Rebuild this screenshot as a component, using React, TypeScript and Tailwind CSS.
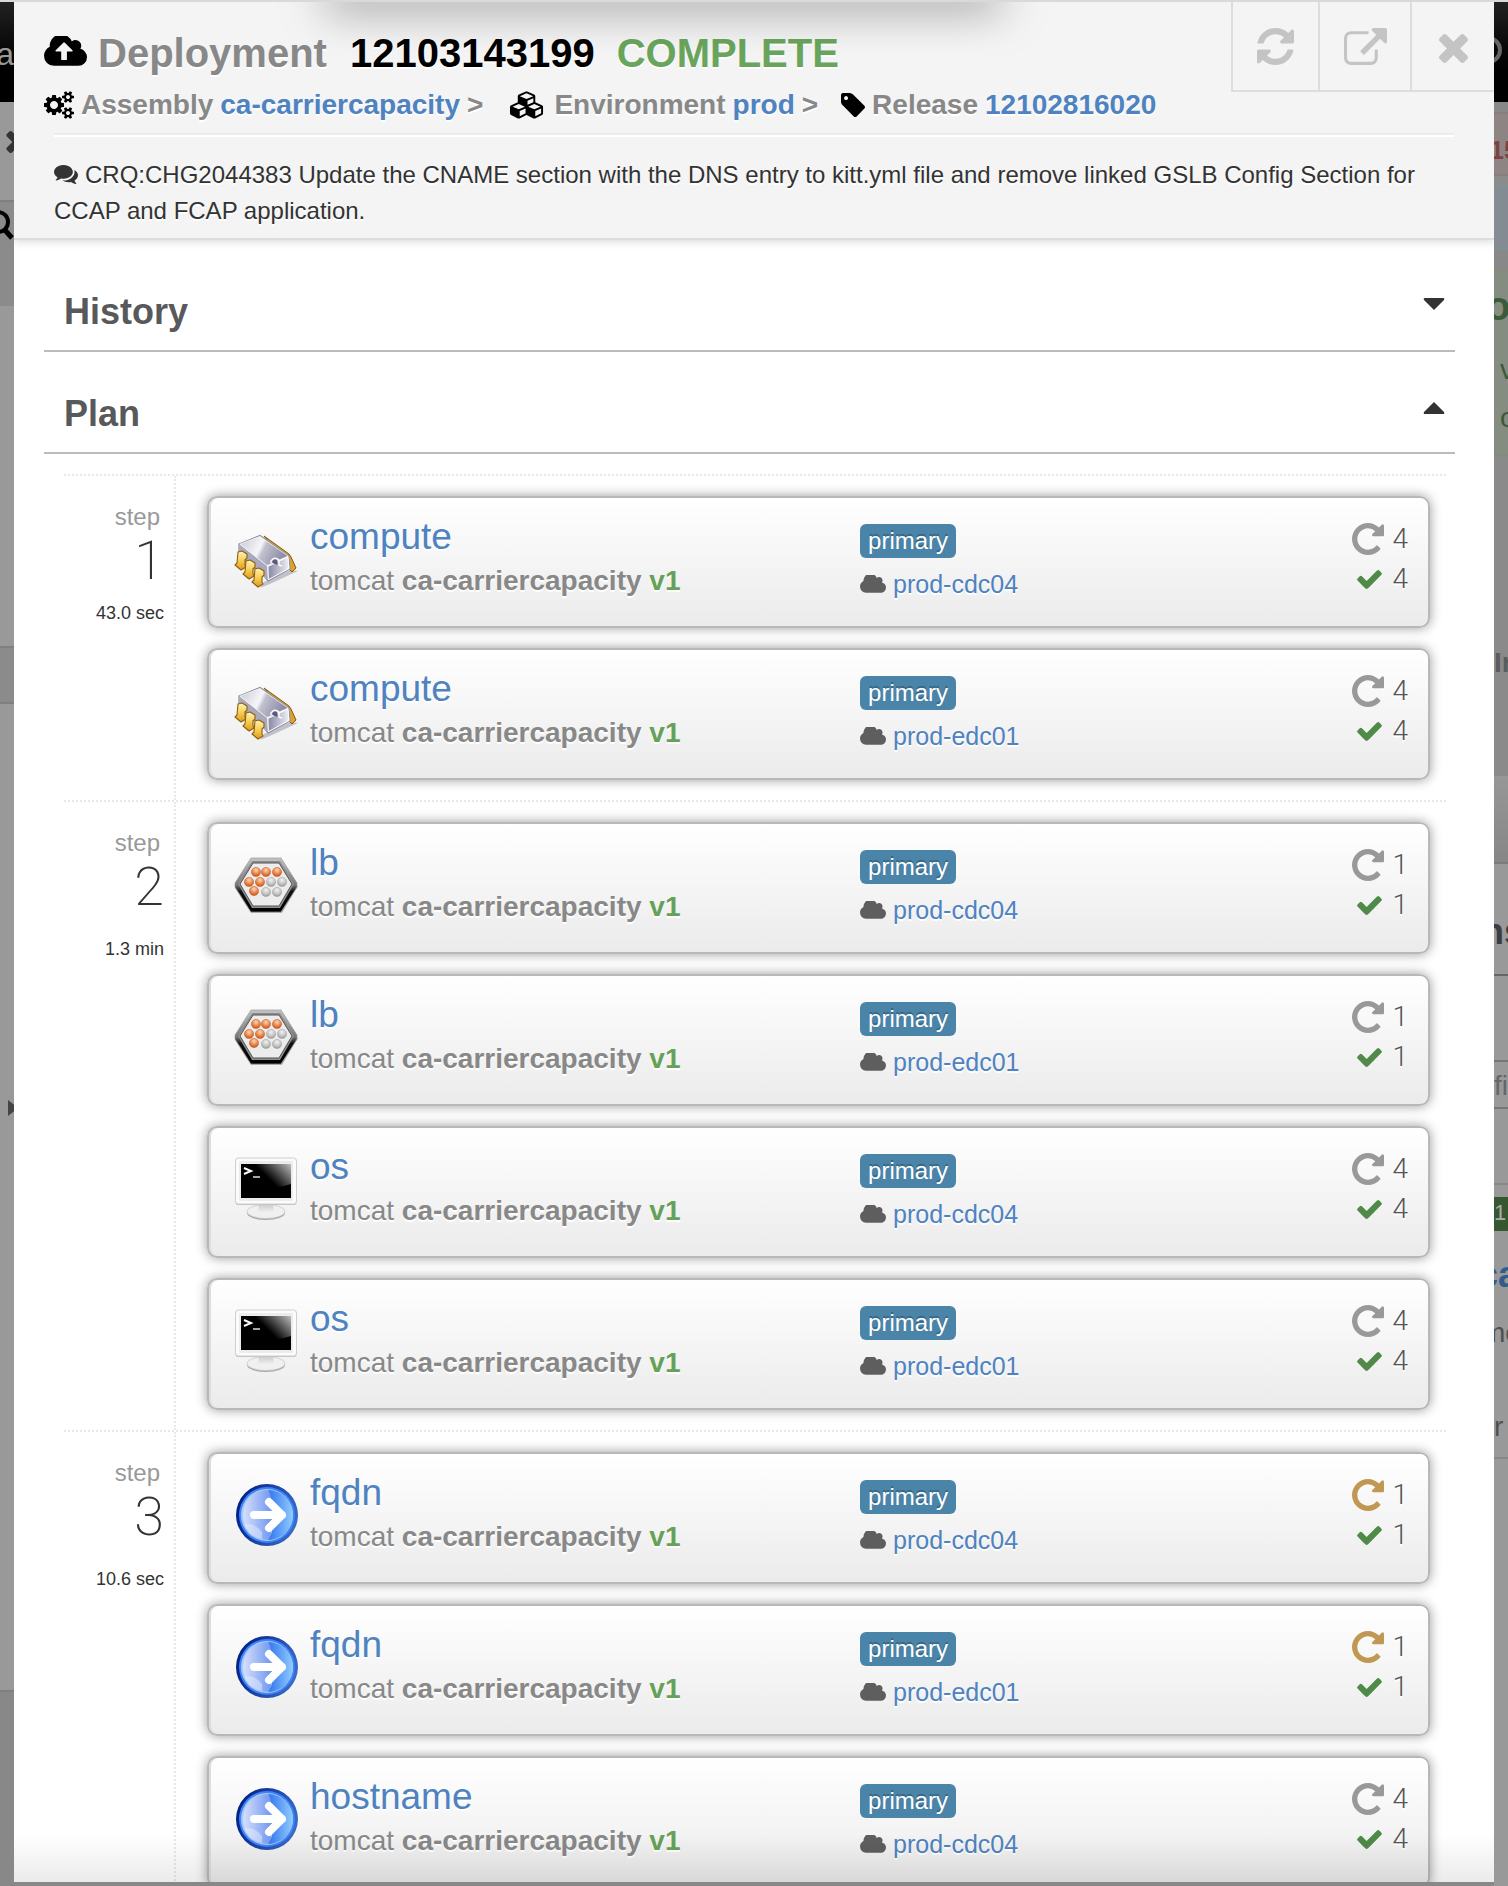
import React, { type ReactNode } from "react";

type GlyphProps = { box: string; d: string; className: string };

const Glyph = ({ box, d, className }: GlyphProps) => (
  <svg viewBox={box} className={className} fill="currentColor" aria-hidden="true">
    <path d={d} />
  </svg>
);

const CLOUD_BODY =
  "q0 159-112.5 271.5t-271.5 112.5h-1088q-185 0-316.5-131.5t-131.5-316.5q0-130 70-240t188-165q-2-30-2-43 0-212 150-362t362-150q156 0 285.5 87t188.5 231q71-62 166-62 106 0 181 75t75 181q0 76-41 138 130 31 213.5 135.5t83.5 238.5z";
const CLOUD = "M1920 1152" + CLOUD_BODY;
const CLOUD_UPLOAD =
  "M1280 864q0-14-9-23l-352-352q-9-9-23-9t-23 9l-351 351q-10 12-10 24 0 14 9 23t23 9h224v352q0 13 9.5 22.5t22.5 9.5h192q13 0 22.5-9.5t9.5-22.5v-352h224q13 0 22.5-9.5t9.5-22.5zm640 288" +
  CLOUD_BODY;
const COGS =
  "M896 896q0-106-75-181t-181-75-181 75-75 181 75 181 181 75 181-75 75-181zm768 512q0-52-38-90t-90-38-90 38-38 90q0 53 37.5 90.5t90.5 37.5 90.5-37.5 37.5-90.5zm0-1024q0-52-38-90t-90-38-90 38-38 90q0 53 37.5 90.5t90.5 37.5 90.5-37.5 37.5-90.5zm-384 421v185q0 10-7 19.5t-16 10.5l-155 24q-11 35-32 76 34 48 90 115 7 11 7 20 0 12-7 19-23 30-82.5 89.5t-78.5 59.5q-11 0-21-7l-115-90q-37 19-77 31-11 108-23 155-7 24-30 24h-186q-11 0-20-7.5t-10-17.5l-23-153q-34-10-75-31l-118 89q-7 7-20 7-11 0-21-8-144-133-144-160 0-9 7-19 10-14 41-53t47-61q-23-44-35-82l-152-24q-10-1-17-9.5t-7-19.5v-185q0-10 7-19.5t16-10.5l155-24q11-35 32-76-34-48-90-115-7-11-7-20 0-12 7-20 22-30 82-89t79-59q11 0 21 7l115 90q34-18 77-32 11-108 23-154 7-24 30-24h186q11 0 20 7.5t10 17.5l23 153q34 10 75 31l118-89q8-7 20-7 11 0 21 8 144 133 144 160 0 8-7 19-12 16-42 54t-45 60q23 48 34 82l152 23q10 2 17 10.5t7 19.5zm640 533v140q0 16-149 31-12 27-30 52 51 113 51 138 0 4-4 7-122 71-124 71-8 0-46-47t-52-68q-20 2-30 2t-30-2q-14 21-52 68t-46 47q-2 0-124-71-4-3-4-7 0-25 51-138-18-25-30-52-149-15-149-31v-140q0-16 149-31 13-29 30-52-51-113-51-138 0-4 4-7 4-2 35-20t59-34 30-16q8 0 46 46.5t52 67.5q20-2 30-2t30 2q51-71 92-112l6-2q4 0 124 70 4 3 4 7 0 25-51 138 17 23 30 52 149 15 149 31zm0-1024v140q0 16-149 31-12 27-30 52 51 113 51 138 0 4-4 7-122 71-124 71-8 0-46-47t-52-68q-20 2-30 2t-30-2q-14 21-52 68t-46 47q-2 0-124-71-4-3-4-7 0-25 51-138-18-25-30-52-149-15-149-31v-140q0-16 149-31 13-29 30-52-51-113-51-138 0-4 4-7 4-2 35-20t59-34 30-16q8 0 46 46.5t52 67.5q20-2 30-2t30 2q51-71 92-112l6-2q4 0 124 70 4 3 4 7 0 25-51 138 17 23 30 52 149 15 149 31z";
const CUBES =
  "M640 1632l384-192v-314l-384 164v342zm-64-454l404-173-404-173-404 173zm1088 454l384-192v-314l-384 164v342zm-64-454l404-173-404-173-404 173zm-448-293l384-165v-266l-384 164v267zm-64-379l441-189-441-189-441 189zm1088 518v416q0 36-19 67t-52 47l-448 224q-25 14-57 14t-57-14l-448-224q-4-2-7-4-2 2-7 4l-448 224q-25 14-57 14t-57-14l-448-224q-33-16-52-47t-19-67v-416q0-38 21.5-70t56.5-48l434-186v-400q0-38 21.5-70t56.5-48l448-192q23-10 50-10t50 10l448 192q35 16 56.5 48t21.5 70v400l434 186q36 16 57 48t21 70z";
const TAG =
  "M448 448q0-53-37.5-90.5t-90.5-37.5-90.5 37.5-37.5 90.5 37.5 90.5 90.5 37.5 90.5-37.5 37.5-90.5zm1067 576q0 53-37 90l-491 492q-39 37-91 37-53 0-90-37l-715-716q-38-37-64.5-101t-26.5-117v-416q0-52 38-90t90-38h416q53 0 117 26.5t102 64.5l715 714q37 39 37 91z";
const COMMENTS =
  "M1408 768q0 139-94 257t-256.5 186.5-353.5 68.5q-86 0-176-16-124 88-278 128-36 9-86 16h-3q-11 0-20.5-8t-11.5-21q-1-3-1-6.5t.5-6.5 2-6l2.5-5 3.5-5.5 4-5 4.5-5 4-4.5q5-6 23-25t26-29.5 22.5-29 25-38.5 20.5-44q-124-72-195-177t-71-224q0-139 94-257t256.5-186.5 353.5-68.5 353.5 68.5 256.5 186.5 94 257zm384 256q0 120-71 224.5t-195 176.5q10 24 20.5 44t25 38.5 22.5 29 26 29.5 23 25q1 1 4 4.5t4.5 5 4 5 3.5 5.5l2.5 5 2 6 .5 6.5-1 6.5q-3 14-13 22t-22 7q-50-7-86-16-154-40-278-128-90 16-176 16-271 0-472-132 58 4 88 4 161 0 309-45t264-129q125-92 192-212t67-254q0-77-23-152 129 71 204 178t75 230z";
const REFRESH =
  "M1511 1056q0 5-1 7-64 268-268 434.5t-478 166.5q-146 0-282.5-55t-243.5-157l-129 129q-19 19-45 19t-45-19-19-45v-448q0-26 19-45t45-19h448q26 0 45 19t19 45-19 45l-137 137q71 66 161 102t187 36q134 0 250-65t186-179q11-17 53-117 8-23 30-23h192q13 0 22.5 9.5t9.5 22.5zm25-800v448q0 26-19 45t-45 19h-448q-26 0-45-19t-19-45 19-45l138-138q-148-137-349-137-134 0-250 65t-186 179q-11 17-53 117-8 23-30 23h-199q-13 0-22.5-9.5t-9.5-22.5v-7q65-268 270-434.5t480-166.5q146 0 284 55.5t245 156.5l130-129q19-19 45-19t45 19 19 45z";
const EXTERNAL =
  "M1408 928v320q0 119-84.5 203.5t-203.5 84.5h-832q-119 0-203.5-84.5t-84.5-203.5v-832q0-119 84.5-203.5t203.5-84.5h704q14 0 23 9t9 23v64q0 14-9 23t-23 9h-704q-66 0-113 47t-47 113v832q0 66 47 113t113 47h832q66 0 113-47t47-113v-320q0-14 9-23t23-9h64q14 0 23 9t9 23zm384-864v512q0 26-19 45t-45 19-45-19l-176-176-652 652q-10 10-23 10t-23-10l-114-114q-10-10-10-23t10-23l652-652-176-176q-19-19-19-45t19-45 45-19h512q26 0 45 19t19 45z";
const TIMES =
  "M1490 1322q0 40-28 68l-136 136q-28 28-68 28t-68-28l-294-294-294 294q-28 28-68 28t-68-28l-136-136q-28-28-28-68t28-68l294-294-294-294q-28-28-28-68t28-68l136-136q28-28 68-28t68 28l294 294 294-294q28-28 68-28t68 28l136 136q28 28 28 68t-28 68l-294 294 294 294q28 28 28 68z";
const REPEAT =
  "M1536 256v448q0 26-19 45t-45 19h-448q-42 0-59-40-17-39 14-69l138-138q-148-137-349-137-104 0-198.5 40.5t-163.5 109.5-109.5 163.5-40.5 198.5 40.5 198.5 109.5 163.5 163.5 109.5 198.5 40.5q119 0 225-52t179-147q7-10 23-12 15 0 25 9l137 138q9 8 9.5 20.5t-7.5 22.5q-109 132-264 204.5t-327 72.5q-156 0-298-61t-245-164-164-245-61-298 61-298 164-245 245-164 298-61q147 0 284.5 55.5t244.5 156.5l130-129q29-31 70-14 39 17 39 59z";
const CHECK =
  "M1671 566q0 40-28 68l-724 724-136 136q-28 28-68 28t-68-28l-136-136-362-362q-28-28-28-68t28-68l136-136q28-28 68-28t68 28l294 295 656-657q28-28 68-28t68 28l136 136q28 28 28 68z";

const ChipIcon = () => (
  <svg viewBox="0 0 64 64" className="size-16" aria-hidden="true">
    <defs>
      <linearGradient id="chipTop" x1="0" y1=".3" x2="1" y2=".6">
        <stop offset="0" stopColor="#cfcfd8" />
        <stop offset=".4" stopColor="#f6f6fa" />
        <stop offset=".5" stopColor="#c0c0ce" />
        <stop offset="1" stopColor="#8484a2" />
      </linearGradient>
      <linearGradient id="chipFront" x1="0" y1="0" x2="1" y2="0">
        <stop offset="0" stopColor="#8686a4" />
        <stop offset="1" stopColor="#f0f0f6" />
      </linearGradient>
      <linearGradient id="chipPin" x1="0" y1="0" x2="0" y2="1">
        <stop offset="0" stopColor="#fff3c0" />
        <stop offset=".5" stopColor="#f8cf52" />
        <stop offset="1" stopColor="#d99a1c" />
      </linearGradient>
    </defs>
    <path d="M26 62 30 56 56 44 64 45 38 57z" fill="#50506e" opacity=".3" />
    <path d="M30 10 55 28 57 31 62 42 58 46 54 42z" fill="#dca22a" stroke="#84570e" strokeWidth="1" />
    <path d="M5 18 26 9.500 55 30 56 43 34 55 30 50 5 30z" fill="#f4f4f8" stroke="#8e8e9e" strokeWidth="1.200" />
    <path d="M5 18 33 40 34 54 5 30z" fill="#a9a9bb" />
    <path d="M6 18 26 10.500 54 30 33 39.500z" fill="url(#chipTop)" stroke="#f6f6fa" strokeWidth=".6" />
    <path d="M34 40.500 54 31 55 42.500 34.500 53.500z" fill="url(#chipFront)" stroke="#fff" strokeWidth=".8" />
    <path d="M37 37V35q3-5 8-1v5l3 1" fill="none" stroke="#fff" strokeWidth="1.400" />
    <path d="M38.500 37v-2q3-3 5 0v4z" fill="#5a5a78" />
    {[
      [0, 0],
      [8, 9],
      [17, 17],
    ].map(([x, y]) => (
      <path
        key={x}
        transform={`translate(${x} ${y})`}
        d="M4 26 8 25 13 28V32L11 34V39L12 41 7 44 1 39 3 37Z"
        fill="url(#chipPin)"
        stroke="#8f5f12"
        strokeWidth="1.100"
        strokeLinejoin="round"
      />
    ))}
  </svg>
);

const BALLS: [number, number, boolean][] = [
  [22, 20, true],
  [32, 20, true],
  [43, 20, true],
  [15, 30, true],
  [26, 30, true],
  [37, 30, false],
  [48, 30, false],
  [20, 39, true],
  [32, 40, false],
  [43, 40, false],
];

const BalancerIcon = () => (
  <svg viewBox="0 0 64 64" className="size-16" aria-hidden="true">
    <defs>
      <linearGradient id="hexRim" x1="0" y1="0" x2="0" y2="1">
        <stop offset="0" stopColor="#c4c4c4" />
        <stop offset=".5" stopColor="#777" />
        <stop offset=".62" stopColor="#111" />
        <stop offset="1" stopColor="#000" />
      </linearGradient>
      <radialGradient id="ballOn" cx=".5" cy=".3" r=".7">
        <stop offset="0" stopColor="#fbd9b8" />
        <stop offset=".6" stopColor="#e88245" />
        <stop offset="1" stopColor="#c8501a" />
      </radialGradient>
      <radialGradient id="ballOff" cx=".5" cy=".3" r=".7">
        <stop offset="0" stopColor="#f2f2f2" />
        <stop offset=".6" stopColor="#c4c4c4" />
        <stop offset="1" stopColor="#989898" />
      </radialGradient>
    </defs>
    <path d="M17 61 1 36v-2L64 34 48 61z" fill="#000" opacity=".25" />
    <path d="M17 6H47L63 31v4L47 60H17L1 35v-4z" fill="url(#hexRim)" stroke="#999" strokeWidth=".7" />
    <path d="M18 9H46L60 32 46 56H18L4 32z" fill="#8f8f8f" />
    <path d="M19 11H45L58 32 45 54H19L6 32z" fill="#ececec" stroke="#555" />
    {BALLS.map(([x, y, on]) => (
      <circle
        key={`${x}-${y}`}
        cx={x}
        cy={y}
        r="4.6"
        fill={on ? "url(#ballOn)" : "url(#ballOff)"}
        stroke={on ? "#c65a28" : "#a0a0a0"}
        strokeWidth=".5"
      />
    ))}
  </svg>
);

const TerminalIcon = () => (
  <svg viewBox="0 0 64 64" className="size-16" aria-hidden="true">
    <defs>
      <linearGradient id="stand" x1="0" y1="0" x2="0" y2="1">
        <stop offset="0" stopColor="#c9c9c9" />
        <stop offset="1" stopColor="#f6f6f6" />
      </linearGradient>
      <linearGradient id="glare" x1="0" y1=".6" x2="1" y2="0">
        <stop offset=".3" stopColor="#000" />
        <stop offset="1" stopColor="#bdbdbd" />
      </linearGradient>
    </defs>
    <ellipse cx="32" cy="57" rx="19" ry="7" fill="#aaa" />
    <ellipse cx="32" cy="55.500" rx="19" ry="7" fill="#f0f0f0" stroke="#c4c4c4" strokeWidth=".7" />
    <path d="M25 48h14l1 8q-8 3-16 0z" fill="url(#stand)" />
    <rect x="1.500" y="3" width="61" height="46" rx="3" fill="#bcbcbc" />
    <rect x="1.500" y="2" width="61" height="46" rx="3" fill="#fbfbfb" stroke="#cfcfcf" />
    <rect x="5" y="5" width="54" height="40" rx="1" fill="#ececec" />
    <rect x="7" y="8" width="50" height="34" fill="#000" />
    <path d="M22 8H57V28Q45 33 32 30 22 28 18 18z" fill="url(#glare)" />
    <path d="M10 12l7 3-7 3" fill="none" stroke="#fff" strokeWidth="2" />
    <path d="M19 21h7" stroke="#ddd" strokeWidth="1.500" />
  </svg>
);

const ArrowIcon = () => (
  <svg viewBox="0 0 64 64" className="size-16" aria-hidden="true">
    <defs>
      <linearGradient id="discRim" x1="0" y1=".3" x2="1" y2=".6">
        <stop offset="0" stopColor="#001e86" />
        <stop offset="1" stopColor="#3a6cc8" />
      </linearGradient>
      <linearGradient id="discL" x1="0" y1="0" x2="1" y2="0">
        <stop offset="0" stopColor="#d6dffb" />
        <stop offset="1" stopColor="#6d96f0" />
      </linearGradient>
      <linearGradient id="discR" x1="0" y1="0" x2="1" y2="0">
        <stop offset="0" stopColor="#2f74ee" />
        <stop offset="1" stopColor="#92ccfd" />
      </linearGradient>
    </defs>
    <circle cx="33" cy="33" r="31" fill="url(#discRim)" />
    <circle cx="33" cy="33" r="28" fill="#3d84f7" />
    <circle cx="33" cy="33" r="26" fill="#a9c8fb" />
    <path d="M34 8A25 25 0 0 1 34 58L38 50Q38 20 34 8z" fill="url(#discR)" />
    <path d="M34 8A25 25 0 0 0 34 58Q38 55 38 33T34 8z" fill="url(#discL)" />
    <path d="M10 42Q20 40 28 50V57Q14 54 10 42z" fill="#e4ebfd" opacity=".5" />
    <path d="M20 33H48M35 20 48 33 35 46" fill="none" stroke="#fff" strokeWidth="8" strokeLinecap="round" strokeLinejoin="round" />
  </svg>
);

type Kind = "chip" | "balancer" | "terminal" | "arrow";
const KINDS: Record<Kind, () => ReactNode> = {
  chip: ChipIcon,
  balancer: BalancerIcon,
  terminal: TerminalIcon,
  arrow: ArrowIcon,
};

type Item = { name: string; kind: Kind; cloud: string; count: number; changed?: boolean };
type Step = { step: number; time: string; items: Item[] };

const STEPS: Step[] = [
  {
    step: 1,
    time: "43.0 sec",
    items: [
      { name: "compute", kind: "chip", cloud: "prod-cdc04", count: 4 },
      { name: "compute", kind: "chip", cloud: "prod-edc01", count: 4 },
    ],
  },
  {
    step: 2,
    time: "1.3 min",
    items: [
      { name: "lb", kind: "balancer", cloud: "prod-cdc04", count: 1 },
      { name: "lb", kind: "balancer", cloud: "prod-edc01", count: 1 },
      { name: "os", kind: "terminal", cloud: "prod-cdc04", count: 4 },
      { name: "os", kind: "terminal", cloud: "prod-edc01", count: 4 },
    ],
  },
  {
    step: 3,
    time: "10.6 sec",
    items: [
      { name: "fqdn", kind: "arrow", cloud: "prod-cdc04", count: 1, changed: true },
      { name: "fqdn", kind: "arrow", cloud: "prod-edc01", count: 1, changed: true },
      { name: "hostname", kind: "arrow", cloud: "prod-cdc04", count: 4 },
    ],
  },
];

const Card = ({ item }: { item: Item }) => {
  const Icon = KINDS[item.kind];
  return (
    <article className="grid h-[132px] shrink-0 grid-cols-[54.3%_1fr_auto] rounded-[10px] border-2 border-[#b8b8b8] bg-linear-to-b from-white to-[#ebebeb] pr-5 shadow-[0_0_12px_rgba(0,0,0,0.4),inset_2px_0_0_#ddd] [text-shadow:0_2px_0_#fff]">
      <div className="flex gap-3 pl-[25px]">
        <div className="pt-7">
          <Icon />
        </div>
        <div className="pt-[15px] whitespace-nowrap">
          <h3 className="text-[37px] leading-[48px]">
            <a href="#component" className="text-[#4e82c0]">{item.name}</a>
          </h3>
          <p className="text-[28px] leading-[40px] text-[#888]">
            tomcat <b>ca-carriercapacity</b> <b className="text-[#65a158]">v1</b>
          </p>
        </div>
      </div>
      <div className="pt-[26px]">
        <span className="block w-fit rounded-md bg-[#4a84a9] px-2 text-[24px] leading-[34px] text-white [text-shadow:0_-2px_0_rgba(0,0,0,0.25)]">
          primary
        </span>
        <div className="mt-[10px] flex items-center gap-[7px] text-[25px] leading-[32px]">
          <Glyph box="0 256 1920 1280" d={CLOUD} className="h-[18px] w-[26px] text-[#5e5e5e]" />
          <a href="#cloud" className="text-[#4e82c0]">{item.cloud}</a>
        </div>
      </div>
      <div className="pt-[21px] font-[Roboto] text-[28px] leading-[40px] font-light text-[#555]">
        <div className="flex items-center justify-end gap-2">
          <Glyph
            box="0 128 1536 1536"
            d={REPEAT}
            className={item.changed ? "size-8 text-[#c09853]" : "size-8 text-[#999]"}
          />
          {item.count}
        </div>
        <div className="flex items-center justify-end gap-[10px]">
          <Glyph box="121 270 1550 1252" d={CHECK} className="h-5 w-[25px] text-[#4f8a48]" />
          {item.count}
        </div>
      </div>
    </article>
  );
};

const StepRow = ({ data }: { data: Step }) => (
  <section className="flex border-t-2 border-dotted border-[#e8e8e8]">
    <div className="w-28 shrink-0 border-r-2 border-dotted border-[#e8e8e8] pt-[25px] pr-[10px] text-right">
      <div className="pr-1 text-[24px] leading-[32px] text-[#999]">step</div>
      <div className="font-[Roboto] text-[54px] leading-[56px] font-extralight text-[#333]">{data.step}</div>
      <div className={data.step === 1 ? "mt-3 text-[18px] leading-6 text-[#333]" : "mt-[22px] text-[18px] leading-6 text-[#333]"}>
        {data.time}
      </div>
    </div>
    <div className="flex min-w-0 flex-1 flex-col gap-5 py-5 pr-4 pl-[31px]">
      {data.items.map((item) => (
        <Card key={item.cloud + item.name} item={item} />
      ))}
    </div>
  </section>
);

const SectionBar = ({ title, open }: { title: string; open: boolean }) => (
  <h2 className="h-[102px] border-b-2 border-[#bbb]">
    <button type="button" aria-expanded={open} className="flex h-full w-full items-center justify-between pt-6 pr-[10px] pl-5">
      <span className="text-[36px] font-bold text-[#58595b]">{title}</span>
      <svg viewBox="0 0 22 12" className={open ? "mb-3 h-3 w-[22px] text-[#333]" : "mb-4 h-3 w-[22px] text-[#333]"} fill="currentColor" aria-hidden="true">
        {open ? <path d="M11 0 21 10Q22 12 20 12H2Q0 12 1 10z" /> : <path d="M11 12 21 2Q22 0 20 0H2Q0 0 1 2z" />}
      </svg>
    </button>
  </h2>
);

const LeftStrip = () => (
  <div className="flex w-[14px] shrink-0 flex-col overflow-hidden bg-[#999]" aria-hidden="true">
    <div className="flex h-[100px] justify-end bg-linear-to-b from-[#222] to-black pt-8 text-[32px] leading-10 text-[#999]">a</div>
    <div className="flex h-[98px] pt-[26px] text-[#333]">
      <Glyph box="121 250 1400 1310" d={TIMES} className="ml-[3px] size-[26px] shrink-0" />
    </div>
    <div className="flex h-[106px] justify-end border-t-2 border-[#808080] bg-[#8b8b8b] pt-2">
      <svg viewBox="0 0 30 30" className="size-[30px] shrink-0 text-black" fill="none" stroke="currentColor" strokeWidth="4">
        <circle cx="14" cy="12" r="10" />
        <path d="m20 19 8 9" strokeWidth="5" />
      </svg>
    </div>
    <div className="h-[340px]" />
    <div className="h-[58px] border-y-2 border-[#808080] bg-[#8b8b8b]" />
    <div className="flex h-[986px] pt-[396px] pl-2">
      <svg viewBox="0 0 10 16" className="h-4 w-[10px] shrink-0 text-[#444]" fill="currentColor">
        <path d="M0 0 10 8 0 16z" />
      </svg>
    </div>
    <div className="flex-1 border-t-2 border-[#808080] bg-[#888]" />
  </div>
);

const RightStrip = () => (
  <div className="flex w-[14px] shrink-0 flex-col overflow-hidden bg-[#999] whitespace-nowrap" aria-hidden="true">
    <div className="flex h-[100px] justify-end bg-linear-to-b from-[#222] to-black pt-[34px] pr-[6px]">
      <span className="size-[28px] shrink-0 rounded-full border-4 border-[#666]" />
    </div>
    <div className="h-[10px] bg-[#888]" />
    <div className="h-16 border-y-2 border-[#8c7c7c] bg-[#8f8484] pt-5 text-[25px] leading-8 font-bold text-[#7d4342]">
      <div className="-ml-1">15</div>
    </div>
    <div className="h-[10px] bg-[#8b8b8b]" />
    <div className="h-16 border-y-2 border-[#7a9296] bg-[#858b93]" />
    <div className="h-5 bg-[#888]" />
    <div className="h-[186px] border-y-2 border-[#838c78] bg-[#858c81] text-[#3a5a38]">
      <div className="-ml-2 h-[74px] pt-3 text-[40px] leading-[44px] font-bold">o</div>
      <div className="pl-[6px] text-[28px] leading-[48px]">v</div>
      <div className="pl-[6px] text-[28px] leading-[48px]">c</div>
    </div>
    <div className="h-[320px] bg-[#8a8a8a] pt-[191px] text-[28px] leading-8 font-bold text-[#5c5c5c]">In</div>
    <div className="h-[88px] border-b-2 border-[#7c7c7c] bg-linear-to-b from-[#979797] to-[#868686]" />
    <div className="h-[112px] border-b-2 border-[#666] pt-12 text-[36px] leading-10 font-bold text-[#3b3e42]">
      <div className="-ml-3">ns</div>
    </div>
    <div className="h-[86px] border-b-2 border-[#777]" />
    <div className="h-[47px] border-b-2 border-[#777] pt-2 text-[28px] leading-8 text-[#666]">fil</div>
    <div className="h-[76px] border-b-2 border-[#888]" />
    <div className="mt-3 h-[34px] bg-[#36572f] text-[22px] leading-8 text-[#aaa]">1</div>
    <div className="h-[70px] pt-6 text-[36px] leading-10 font-bold text-[#335b8c]">
      <div className="-ml-4">ca</div>
    </div>
    <div className="h-[86px] pt-3 text-[28px] leading-10 text-[#505050]">
      <div className="-ml-3">me</div>
    </div>
    <div className="h-[72px] border-b-2 border-[#888] pt-5 text-[28px] leading-10 text-[#505050]">r 4</div>
    <div className="flex-1" />
  </div>
);

const TOOL = "flex h-[90px] items-center justify-center border-b-2 border-l-2 border-[#ddd] text-[#c4c4c4]";

export default function App() {
  return (
    <div className="flex h-screen overflow-hidden border-t-2 border-[#d9d9d9] bg-[#888] font-['Liberation_Sans',sans-serif]">
      <LeftStrip />
      <main className="relative mb-1 flex min-w-0 flex-1 flex-col overflow-hidden bg-white">
        <header className="relative shrink-0 border-b-2 border-[#ddd] bg-[#f4f4f4] pt-[27px] pb-[9px] shadow-[0_2px_8px_rgba(0,0,0,0.15)] [text-shadow:0_2px_0_#fff]">
          <div className="pointer-events-none absolute inset-x-0 top-0 h-14 overflow-hidden">
            <div className="absolute -top-5 right-1/3 left-[21%] h-4 shadow-[0_8px_44px_0_rgba(0,0,0,0.6)]" />
          </div>
          <div className="absolute top-0 right-0 flex">
            <button type="button" aria-label="Refresh" className={`${TOOL} w-[87px]`}>
              <Glyph box="0 128 1536 1536" d={REFRESH} className="size-[37px]" />
            </button>
            <button type="button" aria-label="Open in new window" className={`${TOOL} w-[92px]`}>
              <Glyph box="0 0 1792 1536" d={EXTERNAL} className="h-[37px] w-[43px]" />
            </button>
            <button type="button" aria-label="Close" className={`${TOOL} w-[84px]`}>
              <Glyph box="300 366 1190 1190" d={TIMES} className="mt-1 size-[29px]" />
            </button>
          </div>
          <h1 className="flex items-center pl-[30px] text-[40px] leading-[48px] font-bold whitespace-nowrap">
            <Glyph box="0 256 1920 1280" d={CLOUD_UPLOAD} className="mr-[11px] mb-1 h-[31px] w-[43px]" />
            <span className="mr-[23px] text-[#888]">Deployment</span>
            <span className="mr-[22px] text-black">12103143199</span>
            <span className="text-[#69a55c]">COMPLETE</span>
          </h1>
          <nav className="mt-2 mb-2 flex items-center gap-[7px] pl-[30px] text-[28px] leading-[40px] font-bold whitespace-nowrap text-[#888]">
            <Glyph box="0 0 1920 1792" d={COGS} className="h-7 w-[30px] text-black" />
            <span>Assembly</span>
            <a href="#assembly" className="text-[#4e82c0]">ca-carriercapacity</a>
            <span className="mr-5">&gt;</span>
            <Glyph box="0 0 2304 1792" d={CUBES} className="mr-[2px] h-7 w-[35px] text-black" />
            <span>Environment</span>
            <a href="#environment" className="text-[#4e82c0]">prod</a>
            <span className="mr-4">&gt;</span>
            <Glyph box="0 128 1515 1515" d={TAG} className="size-6 text-black" />
            <span>Release</span>
            <a href="#release" className="text-[#4e82c0]">12102816020</a>
          </nav>
          <hr className="mr-10 ml-10 h-1 border-t-2 border-b-2 border-t-[#ececec] border-b-white" />
          <p className="mt-5 mr-10 ml-10 text-[24px] leading-[36px] text-[#333]">
            <Glyph box="0 256 1792 1408" d={COMMENTS} className="mr-[7px] mb-1 inline-block h-[19px] w-6" />
            CRQ:CHG2044383 Update the CNAME section with the DNS entry to kitt.yml file and remove linked GSLB Config
            Section for CCAP and FCAP application.
          </p>
        </header>
        <div className="min-h-0 flex-1 overflow-hidden pt-[10px]">
          <div className="mr-[39px] ml-[30px]">
            <SectionBar title="History" open={false} />
            <SectionBar title="Plan" open />
          </div>
          <div className="mt-5 mr-12 ml-[50px]">
            {STEPS.map((s) => (
              <StepRow key={s.step} data={s} />
            ))}
          </div>
        </div>
        <div className="pointer-events-none absolute inset-x-0 bottom-0 h-12 bg-linear-to-b from-transparent to-black/8" />
      </main>
      <RightStrip />
    </div>
  );
}
